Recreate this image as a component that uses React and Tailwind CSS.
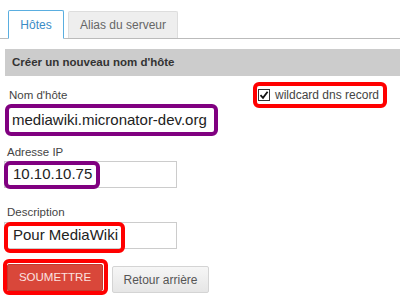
import React from 'react';

function Mark({ color, className }) {
  // coloured annotation frame drawn over the field
  return <div className={`absolute border-4 rounded-[6px] pointer-events-none ${color} ${className}`} />;
}

export default function App() {
  return (
    <div className="w-[400px] h-[301px] overflow-hidden bg-white pt-[10px] font-['Liberation_Sans',Arial,sans-serif] text-[#333]">
      <div className="flex items-end gap-[4px] pl-[8px] border-b border-[#bbb]">
        <div className="w-[56px] h-[29px] -mb-px bg-white border border-[#5aaee0] border-b-white rounded-t-[2px] flex items-center justify-center text-[12px] text-[#3a8cc6]">
          Hôtes
        </div>
        <div className="w-[110px] h-[27px] bg-[#eee] border border-[#ddd] border-b-0 rounded-t-[2px] flex items-center justify-center text-[12px] text-[#666]">
          Alias du serveur
        </div>
      </div>

      <div className="mt-[10px] ml-[5px] h-[27px] bg-[#ccc] pl-[7px] flex items-center text-[11.5px] font-bold text-[#333]">
        Créer un nouveau nom d'hôte
      </div>

      <div className="flex">
        <div className="pl-[4px] w-[230px]">
          <div className="mt-[12px] ml-[5px] h-[14px] leading-[14px] text-[11.5px] text-[#444]">Nom d'hôte</div>
          <div className="mt-[2px] ml-[1px] w-[213px] h-[32px] border-4 border-[#800080] rounded-[6px] bg-white flex items-center pl-[3px] text-[15px] text-[#222]">
            mediawiki.micronator-dev.org
          </div>

          <div className="mt-[9px] ml-[3px] h-[14px] leading-[14px] text-[11.5px] text-[#444]">Adresse IP</div>
          <div className="relative mt-[2px] h-[29px]">
            <div className="mt-[2px] w-[173px] h-[27px] border border-[#ccc] bg-white flex items-center pl-[8px] text-[15px] text-[#222]">
              10.10.10.75
            </div>
            <Mark color="border-[#800080]" className="top-0 left-0 w-[96px] h-[28px]" />
          </div>

          <div className="mt-[15px] ml-[3px] h-[14px] leading-[14px] text-[11.5px] text-[#444]">Description</div>
          <div className="relative -mt-px h-[31px]">
            <div className="mt-[4px] w-[173px] h-[27px] border border-[#ccc] bg-white flex items-center pl-[8px] text-[15px] text-[#222]">
              Pour MediaWiki
            </div>
            <Mark color="border-[#ff0000]" className="top-0 left-0 w-[121px] h-[31px]" />
          </div>

          <div className="flex items-start mt-[11px]">
            <div className="relative ml-[3px]">
              <button className="w-[96px] h-[27px] bg-[#d9473a] border border-[#c23b2f] rounded-[2px] text-[11.5px] text-[#fbe3e0]">
                SOUMETTRE
              </button>
              <Mark color="border-[#ff0000]" className="top-[-5px] left-[-4px] right-[-5px] bottom-[-4px]" />
            </div>
            <button className="ml-[9px] mt-[2px] w-[97px] h-[27px] bg-gradient-to-b from-[#f6f6f6] to-[#e6e6e6] border border-[#d4d4d4] rounded-[2px] text-[12px] text-[#555]">
              Retour arrière
            </button>
          </div>
        </div>

        <div className="ml-auto mr-[13px] mt-[6px] w-[134px] h-[26px] border-4 border-[#ff0000] rounded-[6px] flex items-center pl-[1px] self-start">
          <div className="w-[12px] h-[12px] border border-[#333] bg-white flex items-center justify-center">
            <svg width="10" height="10" viewBox="0 0 10 10">
              <path d="M1.5 5.2 L4 7.8 L8.6 1.8" fill="none" stroke="#111" strokeWidth="1.8" />
            </svg>
          </div>
          <span className="ml-[5px] text-[12px] text-[#444]">wildcard dns record</span>
        </div>
      </div>
    </div>
  );
}
